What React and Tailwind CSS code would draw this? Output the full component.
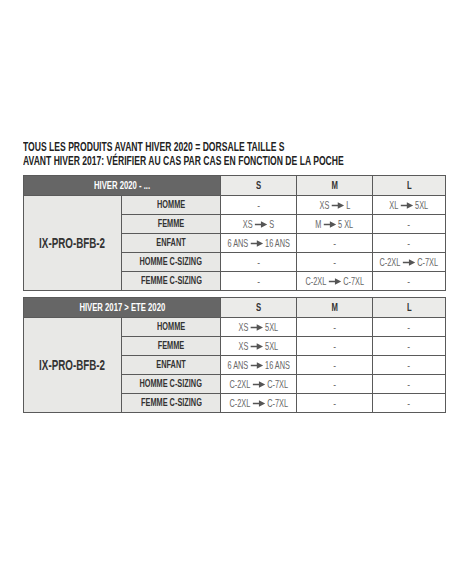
const FONT = { fontFamily: '"Liberation Sans", Arial, sans-serif' };

const Arrow = () => (
  <svg width="18" height="7" viewBox="0 0 18 7" className="mx-[3px] shrink-0">
    <line x1="0" y1="3.5" x2="10" y2="3.5" stroke="#555" strokeWidth="1.3" />
    <polygon points="9,0.3 18,3.5 9,6.7" fill="#555" />
  </svg>
);

function Val({ v }) {
  if (v === "-") return <span className="scale-x-[0.8]">-</span>;
  const [a, b] = v;
  return (
    <span className="flex items-center whitespace-nowrap scale-x-[0.7]">
      {a}
      <Arrow />
      {b}
    </span>
  );
}

const LABELS = ["HOMME", "FEMME", "ENFANT", "HOMME C-SIZING", "FEMME C-SIZING"];

const cellBorder = "border border-[#5a5a5a]";

function Squeeze({ children }) {
  return (
    <div className="flex justify-center items-center">
      <span className="whitespace-nowrap scale-x-[0.7]">{children}</span>
    </div>
  );
}

function SizeTable({ title, rows }) {
  return (
    <table className="border-collapse table-fixed w-[422px]" style={FONT}>
      <colgroup>
        <col className="w-[98px]" />
        <col className="w-[99px]" />
        <col className="w-[76px]" />
        <col className="w-[76px]" />
        <col className="w-[73px]" />
      </colgroup>
      <thead>
        <tr className="h-[20px]">
          <th colSpan={2} className={`bg-[#666666] text-white text-[11px] font-bold p-0 ${cellBorder}`}>
            <Squeeze>{title}</Squeeze>
          </th>
          {["S", "M", "L"].map((s) => (
            <th key={s} className={`bg-[#ebebe9] text-[#333] text-[11px] font-bold p-0 ${cellBorder}`}>
              <Squeeze>{s}</Squeeze>
            </th>
          ))}
        </tr>
      </thead>
      <tbody>
        {rows.map((r, i) => (
          <tr key={i} className="h-[19px]">
            {i === 0 && (
              <td rowSpan={5} className={`bg-[#e8e8e6] text-[#333] text-[14px] font-bold p-0 ${cellBorder}`}>
                <Squeeze>IX-PRO-BFB-2</Squeeze>
              </td>
            )}
            <td className={`bg-[#e8e8e6] text-[#333] text-[10.5px] font-bold p-0 ${cellBorder}`}>
              <Squeeze>{LABELS[i]}</Squeeze>
            </td>
            {r.map((v, j) => (
              <td key={j} className={`bg-white text-[#666] text-[10.5px] p-0 leading-none ${cellBorder}`}>
                <div className="flex justify-center items-center">
                  <Val v={v} />
                </div>
              </td>
            ))}
          </tr>
        ))}
      </tbody>
    </table>
  );
}

const T1 = [
  ["-", ["XS", "L"], ["XL", "5XL"]],
  [["XS", "S"], ["M", "5 XL"], "-"],
  [["6 ANS", "16 ANS"], "-", "-"],
  ["-", "-", ["C-2XL", "C-7XL"]],
  ["-", ["C-2XL", "C-7XL"], "-"],
];

const T2 = [
  [["XS", "5XL"], "-", "-"],
  [["XS", "5XL"], "-", "-"],
  [["6 ANS", "16 ANS"], "-", "-"],
  [["C-2XL", "C-7XL"], "-", "-"],
  [["C-2XL", "C-7XL"], "-", "-"],
];

export default function App() {
  return (
    <div className="w-[452px] h-[584px] bg-white pl-[23px] pt-[140px]">
      <div className="text-[13px] font-bold text-[#222] leading-[14px]" style={FONT}>
        <div className="whitespace-nowrap origin-left scale-x-[0.66]">TOUS LES PRODUITS AVANT HIVER 2020 = DORSALE TAILLE S</div>
        <div className="whitespace-nowrap origin-left scale-x-[0.66]">AVANT HIVER 2017: VÉRIFIER AU CAS PAR CAS EN FONCTION DE LA POCHE</div>
      </div>
      <div className="mt-[7px] flex flex-col gap-[6px]">
        <SizeTable title="HIVER 2020 - ..." rows={T1} />
        <SizeTable title="HIVER 2017 > ETE 2020" rows={T2} />
      </div>
    </div>
  );
}
